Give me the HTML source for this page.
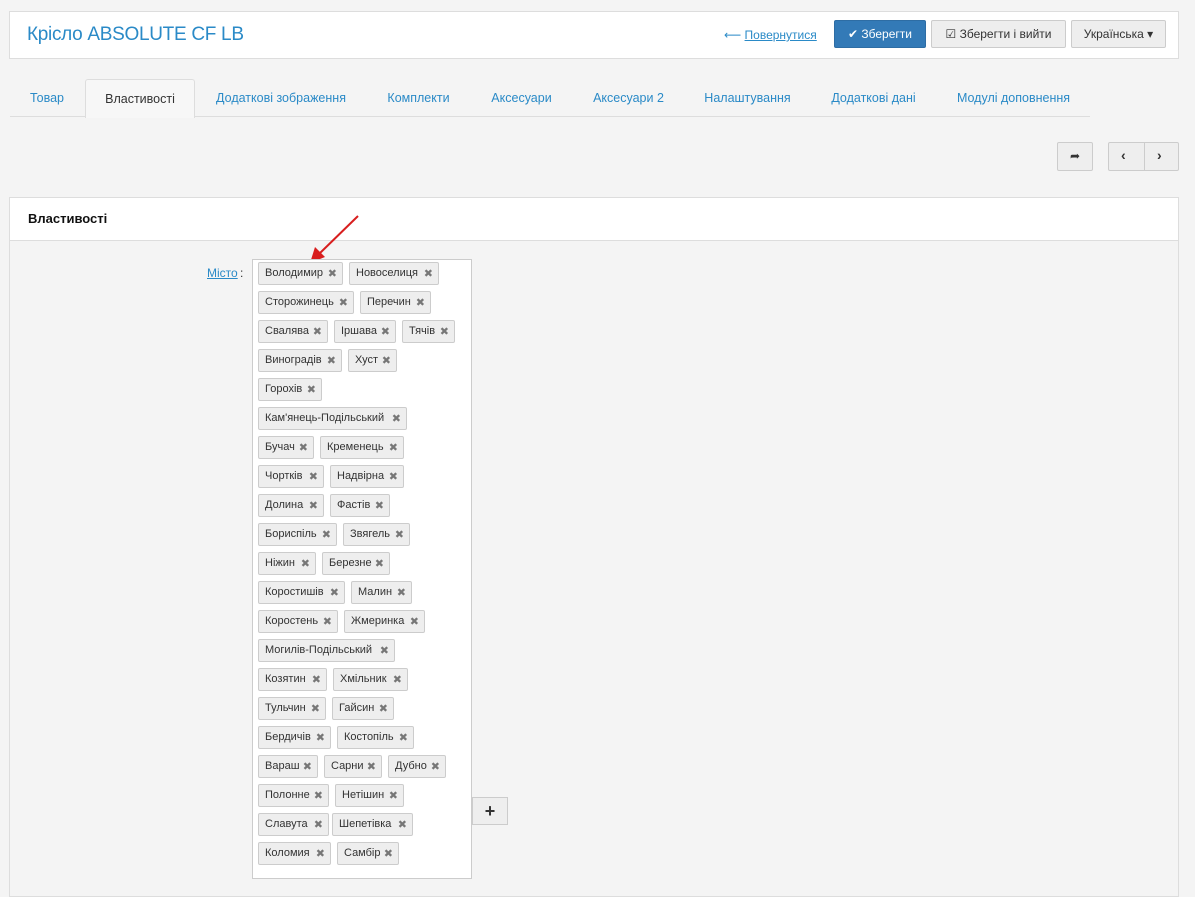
<!DOCTYPE html>
<html><head><meta charset="utf-8"><style>
*{box-sizing:border-box}
body{margin:0;width:1195px;height:859px;overflow:hidden;background:#f4f4f4;font-family:"Liberation Sans","DejaVu Sans",sans-serif;font-size:12px;color:#333;position:relative}
.top{position:absolute;left:9px;top:11px;width:1170px;height:48px;background:#fff;border:1px solid #ddd}
.top h1{position:absolute;left:17px;top:12px;margin:0;font-weight:normal;font-size:19px;color:#2a8ac7;letter-spacing:-0.3px}
.back{position:absolute;left:714px;top:16px;color:#2a8ac7;font-size:12px}
.back u{text-decoration:underline}
.btn{position:absolute;top:8px;height:28px;border:1px solid #ccc;background:#eee;border-radius:2px;font-size:12px;line-height:26px;text-align:center;color:#333}
.tabs{position:absolute;left:10px;top:79px;width:1080px;height:38px;border-bottom:1px solid #ddd}
.tab{position:absolute;top:0;height:38px;line-height:38px;font-size:12.5px;color:#2a8ac7;text-align:center}
.tab.act{background:#f7f7f7;border:1px solid #ddd;border-bottom:none;color:#333;height:39px;border-radius:3px 3px 0 0}
.sb{position:absolute;top:142px;height:29px;border:1px solid #ccc;background:#eee;border-radius:2px}
.panel{position:absolute;left:9px;top:197px;width:1170px;height:700px;border:1px solid #ddd;background:#f4f4f4}
.ph{height:43px;background:#fff;border-bottom:1px solid #ddd;font-weight:bold;font-size:13px;padding:13px 18px;color:#111}
.lbl{position:absolute;left:207px;top:266px;color:#2a8ac7;text-decoration:underline}
.box{position:absolute;left:252px;top:259px;width:220px;height:620px;background:#fff;border:1px solid #ccc}
.row{position:absolute;left:258px;height:23px}
.t{position:absolute;top:0;height:23px;background:#eee;border:1px solid #ccc;border-radius:2px;padding-left:6px;line-height:21px;font-size:11px;white-space:nowrap}
.t:after{content:"\2716";position:absolute;right:5px;top:1px;color:#777;font-size:11px}
.plus{position:absolute;left:472px;top:797px;width:36px;height:28px;border:1px solid #ccc;background:#eee;text-align:center;line-height:26px;font-size:18px;font-weight:bold}
</style></head><body>
<div class="top"><h1>Крісло ABSOLUTE CF LB</h1>
<div class="back">⟵ <u>Повернутися</u></div>
<div class="btn" style="left:824px;width:92px;background:#337ab7;border-color:#2e6da4;color:#fff">✔ Зберегти</div>
<div class="btn" style="left:921px;width:135px">☑ Зберегти і вийти</div>
<div class="btn" style="left:1061px;width:95px">Українська ▾</div>
</div>
<div class="tabs">
<div class="tab" style="left:0;width:74px">Товар</div>
<div class="tab act" style="left:75px;width:110px">Властивості</div>
<div class="tab" style="left:186px;width:170px">Додаткові зображення</div>
<div class="tab" style="left:357px;width:103px">Комплекти</div>
<div class="tab" style="left:461px;width:101px">Аксесуари</div>
<div class="tab" style="left:563px;width:111px">Аксесуари 2</div>
<div class="tab" style="left:675px;width:125px">Налаштування</div>
<div class="tab" style="left:801px;width:125px">Додаткові дані</div>
<div class="tab" style="left:927px;width:153px">Модулі доповнення</div>
</div>
<div class="sb" style="left:1057px;width:36px;text-align:center;line-height:27px">➦</div>
<div class="sb" style="left:1108px;width:71px"><span style="position:absolute;left:12px;top:4px;font-weight:bold;font-size:14px">&lsaquo;</span><span style="position:absolute;left:35px;top:0;bottom:0;border-left:1px solid #ccc"></span><span style="position:absolute;left:48px;top:4px;font-weight:bold;font-size:14px">&rsaquo;</span></div>
<div class="panel"><div class="ph">Властивості</div></div>
<svg style="position:absolute;left:305px;top:212px" width="60" height="55"><line x1="53" y1="4" x2="14" y2="42" stroke="#d81e1e" stroke-width="2"/><polygon points="5,51 10,35 20,45" fill="#d81e1e"/></svg>
<div class="lbl">Місто</div><span style="position:absolute;left:240px;top:266px;color:#333">:</span>
<div class="box"></div>
<div class="row" style="top:262px"><span class="t" style="left:0;width:85px">Володимир</span><span class="t" style="left:91px;width:90px">Новоселиця</span></div>
<div class="row" style="top:291px"><span class="t" style="left:0;width:96px">Сторожинець</span><span class="t" style="left:102px;width:71px">Перечин</span></div>
<div class="row" style="top:320px"><span class="t" style="left:0;width:70px">Свалява</span><span class="t" style="left:76px;width:62px">Іршава</span><span class="t" style="left:144px;width:53px">Тячів</span></div>
<div class="row" style="top:349px"><span class="t" style="left:0;width:84px">Виноградів</span><span class="t" style="left:90px;width:49px">Хуст</span></div>
<div class="row" style="top:378px"><span class="t" style="left:0;width:64px">Горохів</span></div>
<div class="row" style="top:407px"><span class="t" style="left:0;width:149px">Кам'янець-Подільський</span></div>
<div class="row" style="top:436px"><span class="t" style="left:0;width:56px">Бучач</span><span class="t" style="left:62px;width:84px">Кременець</span></div>
<div class="row" style="top:465px"><span class="t" style="left:0;width:66px">Чортків</span><span class="t" style="left:72px;width:74px">Надвірна</span></div>
<div class="row" style="top:494px"><span class="t" style="left:0;width:66px">Долина</span><span class="t" style="left:72px;width:60px">Фастів</span></div>
<div class="row" style="top:523px"><span class="t" style="left:0;width:79px">Бориспіль</span><span class="t" style="left:85px;width:67px">Звягель</span></div>
<div class="row" style="top:552px"><span class="t" style="left:0;width:58px">Ніжин</span><span class="t" style="left:64px;width:68px">Березне</span></div>
<div class="row" style="top:581px"><span class="t" style="left:0;width:87px">Коростишів</span><span class="t" style="left:93px;width:61px">Малин</span></div>
<div class="row" style="top:610px"><span class="t" style="left:0;width:80px">Коростень</span><span class="t" style="left:86px;width:81px">Жмеринка</span></div>
<div class="row" style="top:639px"><span class="t" style="left:0;width:137px">Могилів-Подільський</span></div>
<div class="row" style="top:668px"><span class="t" style="left:0;width:69px">Козятин</span><span class="t" style="left:75px;width:75px">Хмільник</span></div>
<div class="row" style="top:697px"><span class="t" style="left:0;width:68px">Тульчин</span><span class="t" style="left:74px;width:62px">Гайсин</span></div>
<div class="row" style="top:726px"><span class="t" style="left:0;width:73px">Бердичів</span><span class="t" style="left:79px;width:77px">Костопіль</span></div>
<div class="row" style="top:755px"><span class="t" style="left:0;width:60px">Вараш</span><span class="t" style="left:66px;width:58px">Сарни</span><span class="t" style="left:130px;width:58px">Дубно</span></div>
<div class="row" style="top:784px"><span class="t" style="left:0;width:71px">Полонне</span><span class="t" style="left:77px;width:69px">Нетішин</span></div>
<div class="row" style="top:813px"><span class="t" style="left:0;width:71px">Славута</span><span class="t" style="left:74px;width:81px">Шепетівка</span></div>
<div class="row" style="top:842px"><span class="t" style="left:0;width:73px">Коломия</span><span class="t" style="left:79px;width:62px">Самбір</span></div>
<div class="plus">+</div>
</body></html>
